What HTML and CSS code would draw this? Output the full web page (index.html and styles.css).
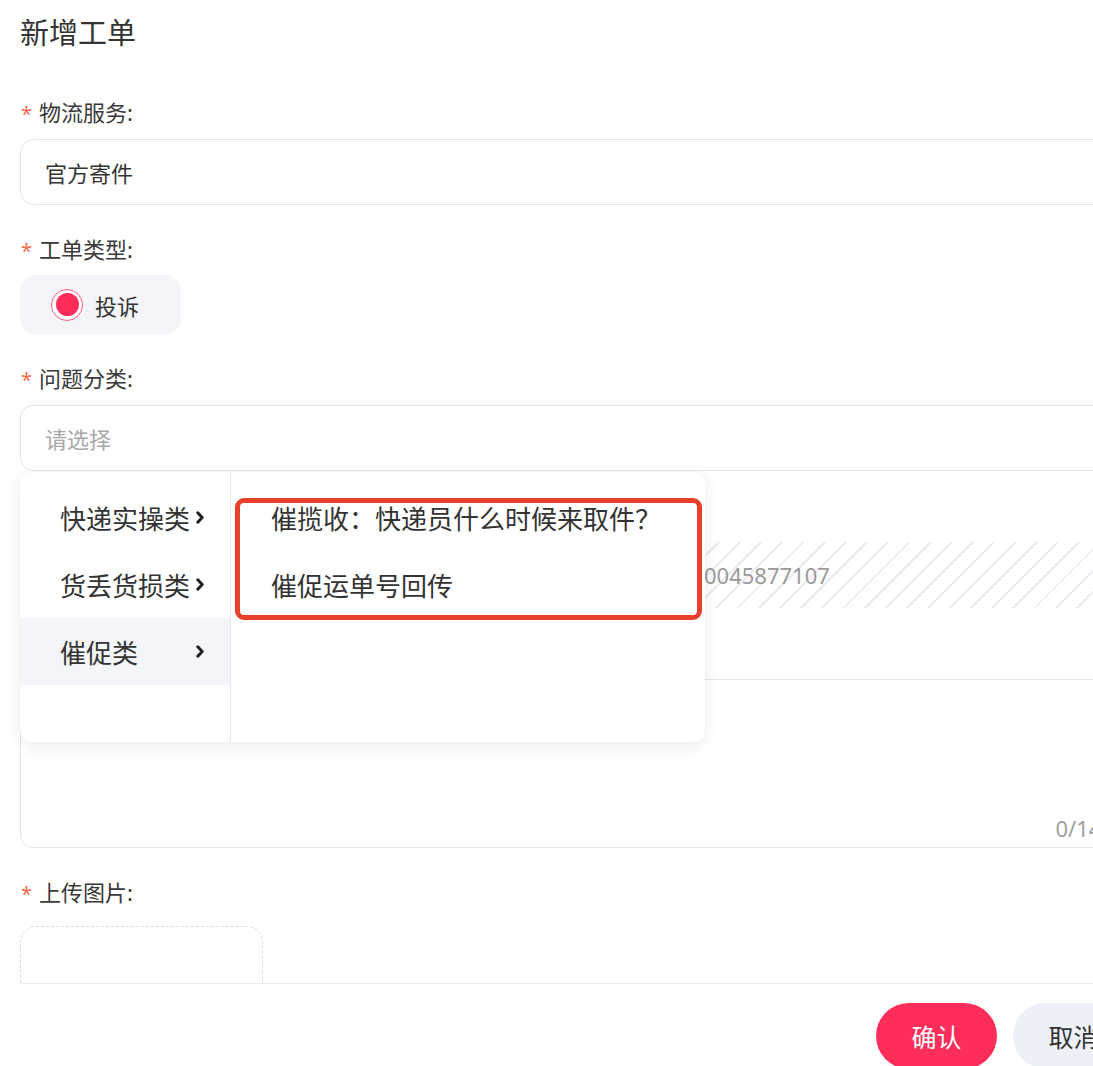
FILE: index.html
```html
<!DOCTYPE html>
<html lang="zh-CN">
<head>
<meta charset="utf-8">
<title>新增工单</title>
<link rel="stylesheet" href="styles.css">
</head>
<body>
<div class="modal">
  <div class="modal-body">
    <h1 class="title">新增工单</h1>
    <div class="form">
      <div class="field">
        <div class="label"><span class="req">*</span>物流服务:</div>
        <div class="input">官方寄件</div>
      </div>

      <div class="field">
        <div class="label"><span class="req">*</span>工单类型:</div>
        <div class="radio-pill">
          <span class="radio"><span class="radio-dot"></span></span>
          <span>投诉</span>
        </div>
      </div>

      <div class="field">
        <div class="label"><span class="req">*</span>问题分类:</div>
        <div class="select-wrap">
          <div class="input placeholder">请选择</div>

          <div class="cascader">
            <ul class="cascader-col primary">
              <li class="cascader-item"><span>快递实操类</span><svg class="chev" viewBox="0 0 8 13"><path d="M1.8 1.8 L6.2 6.5 L1.8 11.2"/></svg></li>
              <li class="cascader-item"><span>货丢货损类</span><svg class="chev" viewBox="0 0 8 13"><path d="M1.8 1.8 L6.2 6.5 L1.8 11.2"/></svg></li>
              <li class="cascader-item active"><span>催促类</span><svg class="chev" viewBox="0 0 8 13"><path d="M1.8 1.8 L6.2 6.5 L1.8 11.2"/></svg></li>
            </ul>
            <ul class="cascader-col secondary">
              <li class="cascader-item">催揽收：快递员什么时候来取件？</li>
              <li class="cascader-item">催促运单号回传</li>
            </ul>
            <div class="mark"></div>
          </div>
        </div>
      </div>

      <!-- waybill row: its label sits under the open cascader -->
      <div class="field">
        <div class="label"></div>
        <div class="input readonly">
          <span class="ro-carrier"></span>
          <span class="ro-number">0045877107</span>
        </div>
      </div>

      <!-- description row: its label sits under the open cascader -->
      <div class="field">
        <div class="label"></div>
        <div class="textarea">
          <span class="counter">0/140</span>
        </div>
      </div>

      <div class="field">
        <div class="label"><span class="req">*</span>上传图片:</div>
        <div class="upload"></div>
      </div>
    </div>
  </div>

  <div class="modal-footer">
    <button class="btn btn-primary">确认</button>
    <button class="btn btn-secondary">取消</button>
  </div>
</div>
</body>
</html>
```

FILE: styles.css
```css
* {
  box-sizing: border-box;
}

html, body {
  margin: 0;
  padding: 0;
  background: #ffffff;
  overflow: hidden;
}

body {
  width: 1093px;
  height: 1066px;
  font-family: "Noto Sans", "Noto Sans CJK SC", sans-serif;
  color: #333333;
}

.modal {
  display: flex;
  flex-direction: column;
  height: 1066px;
  width: 1093px;
}

.modal-body {
  height: 983px;
  flex: none;
  overflow: hidden;
  padding: 13px 0 0 20px;
}

.title {
  margin: 0;
  font-size: 29px;
  font-weight: 400;
  line-height: 40px;
  height: 40px;
  color: #333333;
}

.form {
  width: 1115px;
  margin-top: 44px;
  display: flex;
  flex-direction: column;
  gap: 29px;
}

.field {
  display: flex;
  flex-direction: column;
  gap: 12px;
}

.label {
  font-size: 22px;
  line-height: 30px;
  height: 30px;
  color: #3a3a3a;
  display: flex;
  align-items: center;
}

.req {
  color: #f4694a;
  font-size: 20px;
  width: 19px;
  padding-left: 1px;
  line-height: 30px;
  position: relative;
  top: 2px;
}

.input {
  height: 66px;
  border: 1px solid #e4e4ec;
  border-radius: 13px;
  padding: 0 24px;
  display: flex;
  align-items: center;
  font-size: 22px;
  color: #333333;
  background: #ffffff;
}

.input.placeholder {
  color: #a8a8a8;
}

/* radio pill */
.radio-pill {
  width: 161px;
  height: 59px;
  margin-top: -1px;
  border-radius: 16px;
  background: #f4f5f8;
  display: flex;
  align-items: center;
  gap: 12px;
  padding-left: 31px;
  font-size: 22px;
  color: #333333;
}

.radio {
  width: 32px;
  height: 32px;
  border-radius: 50%;
  border: 1.5px solid #ff5a7c;
  background: #ffffff;
  display: flex;
  align-items: center;
  justify-content: center;
}

.radio-dot {
  width: 23px;
  height: 23px;
  border-radius: 50%;
  background: #ff2d5a;
}

/* select + cascader popup */
.select-wrap {
  position: relative;
}

.cascader {
  position: absolute;
  left: 0;
  top: 67px;
  width: 685px;
  height: 270px;
  background: #ffffff;
  border-radius: 12px;
  box-shadow: 0 4px 18px rgba(0, 0, 0, 0.08), 0 0 2px rgba(0, 0, 0, 0.04);
  display: flex;
  z-index: 10;
}

.cascader-col {
  list-style: none;
  margin: 0;
  padding: 12px 0 0 0;
}

.cascader-col.primary {
  width: 211px;
  border-right: 1px solid #e8e8ee;
}

.cascader-col.secondary {
  flex: 1;
}

.cascader-item {
  height: 67px;
  display: flex;
  align-items: center;
  font-size: 26px;
  color: #333333;
  padding-left: 40px;
}

.primary .cascader-item {
  justify-content: space-between;
  padding-right: 26px;
}

.primary .cascader-item.active {
  background: #f4f5f8;
}

.chev {
  width: 8px;
  height: 13px;
  flex: none;
  fill: none;
  stroke: #1f1f1f;
  stroke-width: 3;
  stroke-linecap: round;
  stroke-linejoin: round;
}

.mark {
  position: absolute;
  left: 215px;
  top: 26px;
  width: 467px;
  height: 122px;
  border: 5px solid #e8402a;
  border-radius: 9px;
  pointer-events: none;
}

/* read-only striped field */
.input.readonly {
  border: none;
  padding: 0 0 0 25px;
  background: repeating-linear-gradient(135deg, #ffffff 0 13px, #ebebf1 13px 15px);
  display: grid;
  grid-template-columns: 659px 1fr;
  color: #9a9a9a;
}

.ro-number {
  color: #9a9a9a;
}

/* text area */
.textarea {
  height: 169px;
  border: 1px solid #e4e4ec;
  border-radius: 13px;
  display: flex;
  align-items: flex-end;
  justify-content: flex-end;
  padding: 0 20px 4px 0;
}

.counter {
  font-size: 22px;
  color: #a0a0a0;
  line-height: 30px;
}

/* upload */
.field:last-child .label {
  margin-bottom: 7px;
}

.upload {
  width: 243px;
  height: 243px;
  border: 1px dashed #dcdce4;
  border-radius: 16px;
}

/* footer */
.modal-footer {
  margin-left: 20px;
  border-top: 1px solid #ebebf0;
  padding-top: 19px;
  display: flex;
  gap: 16px;
  padding-left: 856px;
  width: 1200px;
  flex: none;
}

.btn {
  width: 121px;
  height: 66px;
  border-radius: 33px;
  border: none;
  font-family: "Noto Sans", "Noto Sans CJK SC", sans-serif;
  font-size: 25px;
  flex: none;
  display: flex;
  align-items: center;
  justify-content: center;
  padding: 0;
}

.btn-primary {
  background: #ff2d5a;
  color: #ffffff;
}

.btn-secondary {
  background: #eef0f7;
  color: #333333;
}
```
